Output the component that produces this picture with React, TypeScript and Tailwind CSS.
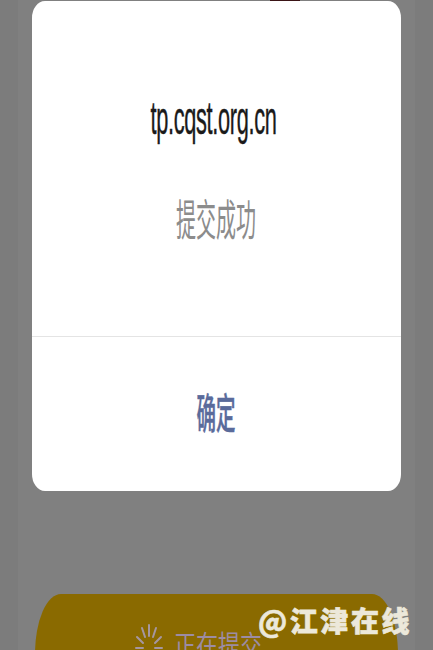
export default function App() {
  return (
    <div className="relative h-[650px] w-[433px] overflow-hidden bg-[#7c7c7c] font-['Noto_Sans_CJK_SC',sans-serif]">
      <div className="mx-[18px] flex h-full flex-col bg-[#808080] px-[17px] pt-[594px]">
        <div className="flex h-[110px] shrink-0 items-start justify-center gap-[11px] rounded-t-[26px_60px] bg-[#8a6a00] pr-[36px] pt-[30px]">
          <svg width="28" height="36" viewBox="0 0 28 36" stroke="#a596a0" strokeWidth="2" strokeLinecap="round">
            <path d="M14 1v11M7 4l3 9M21 4l-3 9M2 13l6 6M26 13l-6 6M1 24h7M27 24h-7" />
          </svg>
          <span className="mt-[-1px] origin-top scale-y-[1.3] text-[22px] leading-[30px] text-[#9c8ca4]">正在提交</span>
        </div>
      </div>

      <div className="absolute left-[270px] top-0 h-[2px] w-[30px] bg-[#3a1416]" />

      <div className="absolute left-[32px] top-[1px] flex h-[490px] w-[369px] flex-col rounded-[13px_/_17px] bg-white">
        <div className="flex h-[336px] flex-col items-center border-b border-[#e4e4e4]">
          <div className="mr-[6px] mt-[99px] scale-x-[0.66] scale-y-[1.38] font-['Liberation_Sans',sans-serif] text-[33px] leading-[38px] tracking-[-0.5px] text-[#1a1a1a] [-webkit-text-stroke:0.3px_#1a1a1a]">tp.cqst.org.cn</div>
          <div className="mt-[62px] scale-x-[0.77] scale-y-[1.67] text-[26px] leading-[36px] text-[#8c8c8c]">提交成功</div>
        </div>
        <div className="flex flex-1 items-center justify-center pb-[6px]">
          <span className="scale-x-[0.75] scale-y-[1.63] text-[26px] font-medium leading-[36px] text-[#5a6b9b] [-webkit-text-stroke:0.3px_#5a6b9b]">确定</span>
        </div>
      </div>

      <div className="absolute left-[258px] top-[601px] text-[28px] font-black leading-[38px] tracking-[2.6px] text-[#ece8da] [-webkit-text-stroke:0.6px_#ece8da]">@江津在线</div>
    </div>
  );
}
